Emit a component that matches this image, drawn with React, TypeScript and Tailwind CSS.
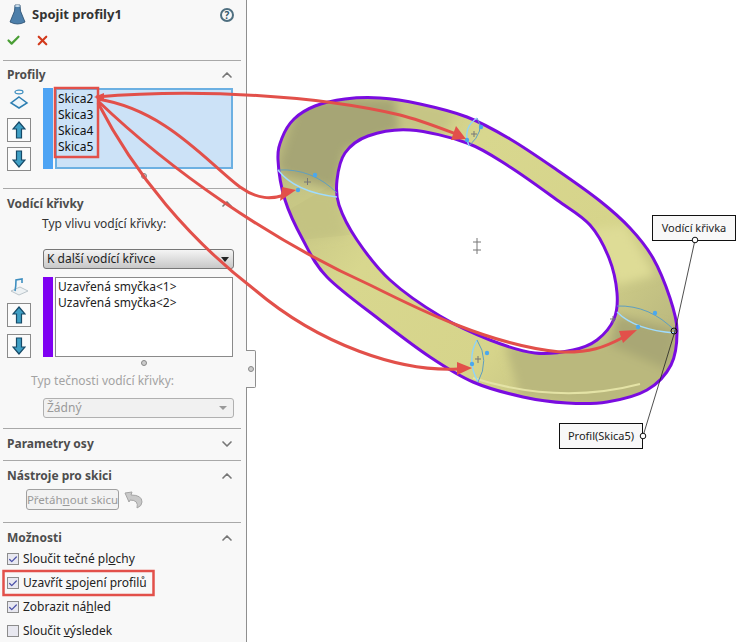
import { ChevronDown, ChevronUp, Check, X } from "lucide-react";
import type { ReactNode } from "react";

type Pt = [number, number];

const outer: Pt[] = [
  [278, 160], [282, 138], [294, 119], [315, 106], [345, 99], [380, 98], [420, 104], [467, 117], [510, 139], [557, 170],
  [600, 201], [630, 228], [653, 258], [670, 298], [677, 330], [671, 365], [647, 390], [607, 402], [567, 403], [523, 397], [473, 382],
  [430, 357], [380, 320], [327, 277], [303, 240], [285, 200],
];
const inner: Pt[] = [
  [337, 180], [345, 153], [368, 136], [410, 130], [467, 143], [510, 167], [557, 200], [590, 225], [609, 258], [617, 293], [614, 319],
  [597, 340], [573, 350], [535, 353], [490, 340], [440, 316], [390, 280], [357, 240], [339, 205],
];

// closed catmull-rom through the traced points
function smooth(pts: Pt[]) {
  const n = pts.length;
  let d = `M${pts[0][0]} ${pts[0][1]}`;
  for (let i = 0; i < n; i++) {
    const p0 = pts[(i - 1 + n) % n];
    const p1 = pts[i];
    const p2 = pts[(i + 1) % n];
    const p3 = pts[(i + 2) % n];
    d += `C${p1[0] + (p2[0] - p0[0]) / 6} ${p1[1] + (p2[1] - p0[1]) / 6} ${p2[0] - (p3[0] - p1[0]) / 6} ${p2[1] - (p3[1] - p1[1]) / 6} ${p2[0]} ${p2[1]}`;
  }
  return d + "Z";
}

const sans = "font-['Noto_Sans',sans-serif]";

function MoveButton({ dir }: { dir: "up" | "down" }) {
  return (
    <div className="flex h-[24px] w-[24px] items-center justify-center border border-[#8a8a8a] bg-[#fbfbfb]">
      <svg width="14" height="18" viewBox="0 0 14 18" className={dir === "down" ? "rotate-180" : ""}>
        <path d="M7 1 L13 8 L9.5 8 L9.5 17 L4.5 17 L4.5 8 L1 8 Z" fill="#3f9fc4" stroke="#174a68" strokeWidth="1.2" />
      </svg>
    </div>
  );
}

function SectionTitle({ children, open = true }: { children: ReactNode; open?: boolean }) {
  const Icon = open ? ChevronUp : ChevronDown;
  return (
    <div className="flex h-[16px] items-center justify-between pl-[4px] pr-[6px]">
      <span className="text-[12px] font-bold text-[#4d4d4d]">{children}</span>
      <Icon size={16} strokeWidth={2.5} className="text-[#777]" />
    </div>
  );
}

function Dot() {
  return <div className="mx-auto h-[6px] w-[6px] rounded-full border border-[#888] bg-[#ccc]" />;
}

function Option({ checked = true, children }: { checked?: boolean; children: ReactNode }) {
  return (
    <div className="flex h-[24px] items-center gap-[4px] pl-[4px] text-[12px] text-[#222]">
      <div className="flex h-[12px] w-[12px] items-center justify-center border border-[#8c8c8c] bg-[#e8e8f0]">
        {checked && <Check size={11} strokeWidth={3} className="text-[#4a4fa8]" />}
      </div>
      <span>{children}</span>
    </div>
  );
}

function Overlay() {
  const red = "#e2504a";
  return (
    <svg className="pointer-events-none absolute left-0 top-0" width="750" height="642" viewBox="0 0 750 642">
      <defs>
        <linearGradient id="ring" x1="0" y1="0" x2="1" y2="0.7">
          <stop offset="0" stopColor="#b5b47c" />
          <stop offset="0.4" stopColor="#d8d78e" />
          <stop offset="0.75" stopColor="#d6d48b" />
          <stop offset="1" stopColor="#bdbb80" />
        </linearGradient>
        <clipPath id="ringClip">
          <path d={smooth(outer) + smooth(inner)} clipRule="evenodd" />
        </clipPath>
        <filter id="soft" x="-20%" y="-20%" width="140%" height="140%">
          <feGaussianBlur stdDeviation="5" />
        </filter>
      </defs>

      <path d={smooth(outer) + smooth(inner)} fill="url(#ring)" fillRule="evenodd" />
      <g clipPath="url(#ringClip)">
        <g filter="url(#soft)">
          <path d="M278 165 L300 100 L395 98 L400 130 L345 150 L336 190 L285 175 Z" fill="#a6a574" />
          <path d="M395 98 L405 130 L445 135 L455 110 Z" fill="#c6c585" />
          <path d="M283 195 L336 195 L345 235 L300 240 Z" fill="#c8c785" />
          <path d="M505 345 L600 345 L625 335 L675 345 L660 395 L600 405 L520 395 Z" fill="#bab87d" />
          <path d="M617 315 L678 330 L668 370 L610 345 Z" fill="#a9a774" />
          <path d="M590 230 L625 225 L655 275 L616 285 Z" fill="#dedc96" />
        </g>
        <path d="M340 180 L280 215 L300 240 L350 235 Z" fill="#000" opacity="0.02" />
        <path d="M473 378 Q 560 405 640 384" fill="none" stroke="#e4e3a6" strokeWidth="2" />
      </g>
      <path d={smooth(outer)} fill="none" stroke="#7a0ce0" strokeWidth="3" />
      <path d={smooth(inner)} fill="none" stroke="#7a0ce0" strokeWidth="3" />

      {/* profile sketches */}
      <g fill="none" stroke="#4aa8dc" strokeWidth="1">
        <path d="M278 170 Q 312 168 337 193" stroke="#5f9fc0" />
        <path d="M278 170 Q 295 192 337 197" stroke="#9fdcff" strokeWidth="1.4" />
        <path d="M477 118 Q 486 130 469 146" stroke="#5f9fc0" />
        <path d="M477 118 Q 462 128 469 146" stroke="#8fd4fa" strokeWidth="1.4" />
        <path d="M617 306 Q 650 305 675 331" stroke="#5f9fc0" />
        <path d="M617 312 Q 635 330 675 333" stroke="#9fdcff" strokeWidth="1.4" />
        <path d="M477 340 Q 466 360 478 382" stroke="#8fd4fa" strokeWidth="1.4" />
        <path d="M477 340 Q 490 360 478 382" stroke="#5f9fc0" />
      </g>
      <g fill="#4aa8ee">
        <circle cx="298" cy="190" r="2.2" /><circle cx="315" cy="175" r="2.2" />
        <circle cx="467" cy="140" r="2.2" /><circle cx="481" cy="127" r="2.2" />
        <circle cx="638" cy="327" r="2.2" /><circle cx="655" cy="313" r="2.2" />
        <circle cx="472" cy="364" r="2.2" /><circle cx="487" cy="353" r="2.2" />
      </g>
      <g stroke="#777" strokeWidth="1" fill="none">
        <path d="M473 242h8M477 238v8M473 250h8M477 246v8" />
        <path d="M304 182h7M307.500 178v7M610 319h6M613 316v7M475 359h6M478 356v7M471 134h6M474 131v6" />
      </g>

      {/* red arrows */}
      <g fill="none" stroke={red} strokeWidth="3">
        <path d="M96 97 C 200 88 320 96 400 115 C 420 120 440 128 456 134" />
        <path d="M98 99 C 165 110 205 160 240 187 C 258 200 272 199 285 195" />
        <path d="M98 101 C 170 170 270 240 370 285 C 420 310 490 345 560 352 C 590 353 605 347 622 338" />
        <path d="M98 103 C 135 175 190 240 255 290 C 320 345 400 372 458 369" />
      </g>
      <g fill={red}>
        <path d="M466 139 L 451 140 L 456 126 Z" />
        <path d="M296 190 L 280 201 L 282 187 Z" />
        <path d="M637 330 L 623 343 L 619 331 Z" />
        <path d="M472 368 L 457 375 L 457 362 Z" />
        <path d="M94 97 L 104 93 L 104 101 Z" />
      </g>

      {/* red highlight frames */}
      <rect x="55" y="88" width="43" height="69" fill="none" stroke={red} strokeWidth="2.5" />
      <rect x="3.500" y="571" width="150" height="24" fill="none" stroke={red} strokeWidth="2.5" />

      {/* callout leaders */}
      <path d="M695 240 L675 331 L643 436" fill="none" stroke="#222" strokeWidth="0.8" />
      <circle cx="695" cy="240" r="2.8" fill="#fff" stroke="#111" />
      <circle cx="674" cy="331" r="3" fill="none" stroke="#111" />
      <circle cx="643" cy="436" r="2.8" fill="#fff" stroke="#111" />
    </svg>
  );
}

function Panel() {
  return (
    <div className={`relative h-[642px] w-[247px] shrink-0 border-r border-[#8f8f8f] bg-[#f8f8f8] ${sans}`}>
      {/* header */}
      <div className="flex h-[60px] flex-col">
        <div className="flex h-[28px] items-center justify-between pl-[9px] pr-[12px] pt-[2px]">
          <div className="flex items-center gap-[6px]">
            <svg width="17" height="22" viewBox="0 0 17 22">
              <path d="M6 1 L11 1 L11.500 7 L16 18 Q 8.500 22 1 18 L5.500 7 Z" fill="#4d7faa" stroke="#24496b" strokeWidth="0.8" />
              <ellipse cx="8.500" cy="2" rx="2.600" ry="1" fill="#cfe0ee" />
            </svg>
            <span className="text-[13px] font-bold text-[#333]">Spojit profily1</span>
          </div>
          <div className="flex h-[14px] w-[14px] items-center justify-center rounded-full border-2 border-[#4f6f80] text-[10px] font-bold leading-none text-[#34566a]">
            ?
          </div>
        </div>
        <div className="flex items-center gap-[14px] pl-[6px] pt-[5px]">
          <Check size={15} strokeWidth={3.5} className="text-[#4a9e35]" />
          <X size={15} strokeWidth={3.5} className="text-[#d23a1c]" />
        </div>
      </div>

      {/* Profily */}
      <div className="mx-[3px] h-[128px] w-[238px] border-t border-[#a8a8a8] pt-[6px]">
        <SectionTitle>Profily</SectionTitle>
        <div className="mt-[5px] flex">
          <div className="flex w-[40px] flex-col gap-[5px] pl-[4px]">
            <svg width="24" height="25" viewBox="0 0 24 25">
              <ellipse cx="12" cy="4" rx="4" ry="1.800" fill="none" stroke="#3f8fc0" strokeWidth="1.200" />
              <path d="M12 9 L20 15 L12 20 L4 15 Z" fill="#eef5fa" stroke="#2d7fb2" strokeWidth="1.500" />
            </svg>
            <MoveButton dir="up" />
            <MoveButton dir="down" />
          </div>
          <div className="h-[81px] w-[10px] bg-[#4ea4f4]" />
          <div className="ml-[2px] h-[81px] w-[178px] border-2 border-[#6cb0e2] bg-[#cce2f7] pl-[1px] pt-[1px] text-[12px] leading-[16px] text-[#111]">
            <div>Skica2</div>
            <div>Skica3</div>
            <div>Skica4</div>
            <div>Skica5</div>
          </div>
        </div>
        <div className="mt-[2px] pl-[138px]">
          <div className="h-[6px] w-[6px] rounded-full border border-[#888] bg-[#ccc]" />
        </div>
      </div>

      {/* Vodici krivky */}
      <div className="mx-[3px] h-[240px] w-[238px] border-t border-[#a8a8a8] pt-[7px]">
        <SectionTitle>Vodící křivky</SectionTitle>
        <div className="mt-[4px] pl-[39px] text-[12px] leading-[16px] text-[#333]">
          Typ vlivu vod<u>í</u>cí křivky:
        </div>
        <div className="ml-[40px] mt-[17px] flex h-[20px] w-[191px] items-center justify-between rounded-[3px] border border-[#777] bg-gradient-to-b from-[#f5f5f5] to-[#c8c8c8] pl-[3px] pr-[4px] text-[12px] text-[#222]">
          <span>K další vodící křivce</span>
          <span className="h-0 w-0 border-x-[4px] border-t-[5px] border-x-transparent border-t-[#222]" />
        </div>
        <div className="mt-[8px] flex">
          <div className="flex w-[40px] flex-col gap-[7px] pl-[4px]">
            <svg width="24" height="19" viewBox="0 0 24 19">
              <path d="M4 14 L13 10 L21 14 L12 18 Z" fill="#eef2f4" stroke="#bcc6cc" />
              <path d="M8 14 Q 9 9 9 3 L15 2 L15 6" fill="none" stroke="#3f8fc0" strokeWidth="1.600" />
            </svg>
            <MoveButton dir="up" />
            <MoveButton dir="down" />
          </div>
          <div className="h-[80px] w-[10px] bg-[#7f00f2]" />
          <div className="ml-[2px] h-[80px] w-[178px] border border-[#8a8a8a] bg-white pl-[2px] pt-[1px] text-[12px] leading-[16px] text-[#222]">
            <div>Uzavřená smyčka&lt;1&gt;</div>
            <div>Uzavřená smyčka&lt;2&gt;</div>
          </div>
        </div>
        <div className="mt-[2px] pl-[138px]">
          <div className="h-[6px] w-[6px] rounded-full border border-[#888] bg-[#ccc]" />
        </div>
        <div className="mt-[7px] pl-[28px] text-[12px] leading-[16px] text-[#a3a3a3]">Typ tečnosti vodící křivky:</div>
        <div className="ml-[40px] mt-[9px] flex h-[20px] w-[191px] items-center justify-between rounded-[3px] border border-[#b0b0b0] bg-[#f1f1f1] pl-[3px] pr-[6px] text-[12px] text-[#9a9a9a]">
          <span>Žádný</span>
          <span className="h-0 w-0 border-x-[4px] border-t-[4px] border-x-transparent border-t-[#999]" />
        </div>
      </div>

      <div className="mx-[3px] h-[32px] w-[238px] border-t border-[#a8a8a8] pt-[7px]">
        <SectionTitle open={false}>Parametry osy</SectionTitle>
      </div>

      <div className="mx-[3px] h-[62px] w-[238px] border-t border-[#a8a8a8] pt-[7px]">
        <SectionTitle>Nástroje pro skici</SectionTitle>
        <div className="ml-[23px] mt-[5px] flex items-center gap-[5px]">
          <div className="flex h-[21px] w-[93px] items-center justify-center whitespace-nowrap rounded-[3px] border border-[#a0a0a0] bg-[#f2f2f2] text-[11.500px] text-[#9a9a9a]">
            <span>Přetáh<u>n</u>out skicu</span>
          </div>
          <svg width="20" height="18" viewBox="0 0 20 18">
            <path d="M1 2 L8 1 L7 4 Q 18 4 18 11 Q 18 15 13 17 Q 15 9 6 9 L5 11 Z" fill="#c9c9c9" stroke="#a5a5a5" />
          </svg>
        </div>
      </div>

      <div className="mx-[3px] w-[238px] border-t border-[#a8a8a8] pt-[7px]">
        <SectionTitle>Možnosti</SectionTitle>
        <div className="mt-[1px]">
          <Option>Sloučit tečné pl<u>o</u>chy</Option>
          <Option>Uzavřít <u>s</u>pojení profilů</Option>
          <Option>Zobrazit ná<u>h</u>led</Option>
          <Option checked={false}>Sloučit <u>v</u>ýsledek</Option>
        </div>
      </div>

      {/* grip tab on the panel edge */}
      <div className="absolute left-[246px] top-[350px] flex h-[38px] w-[10px] items-center justify-center rounded-r-[2px] border border-l-0 border-[#8f8f8f] bg-[#f8f8f8]">
        <Dot />
      </div>
    </div>
  );
}

function Callout({ className, children }: { className: string; children: ReactNode }) {
  return (
    <div className={`absolute flex items-center justify-center border border-[#111] bg-[#f8f8f8] text-[11px] text-[#222] ${sans} ${className}`}>
      {children}
    </div>
  );
}

export default function App() {
  return (
    <div className="relative flex h-[642px] w-[750px] overflow-hidden bg-white">
      <Panel />
      <Callout className="left-[652px] top-[215px] h-[26px] w-[84px]">Vodící křivka</Callout>
      <Callout className="left-[559px] top-[423px] h-[26px] w-[84px]">Profil(Skica5)</Callout>
      <Overlay />
    </div>
  );
}
